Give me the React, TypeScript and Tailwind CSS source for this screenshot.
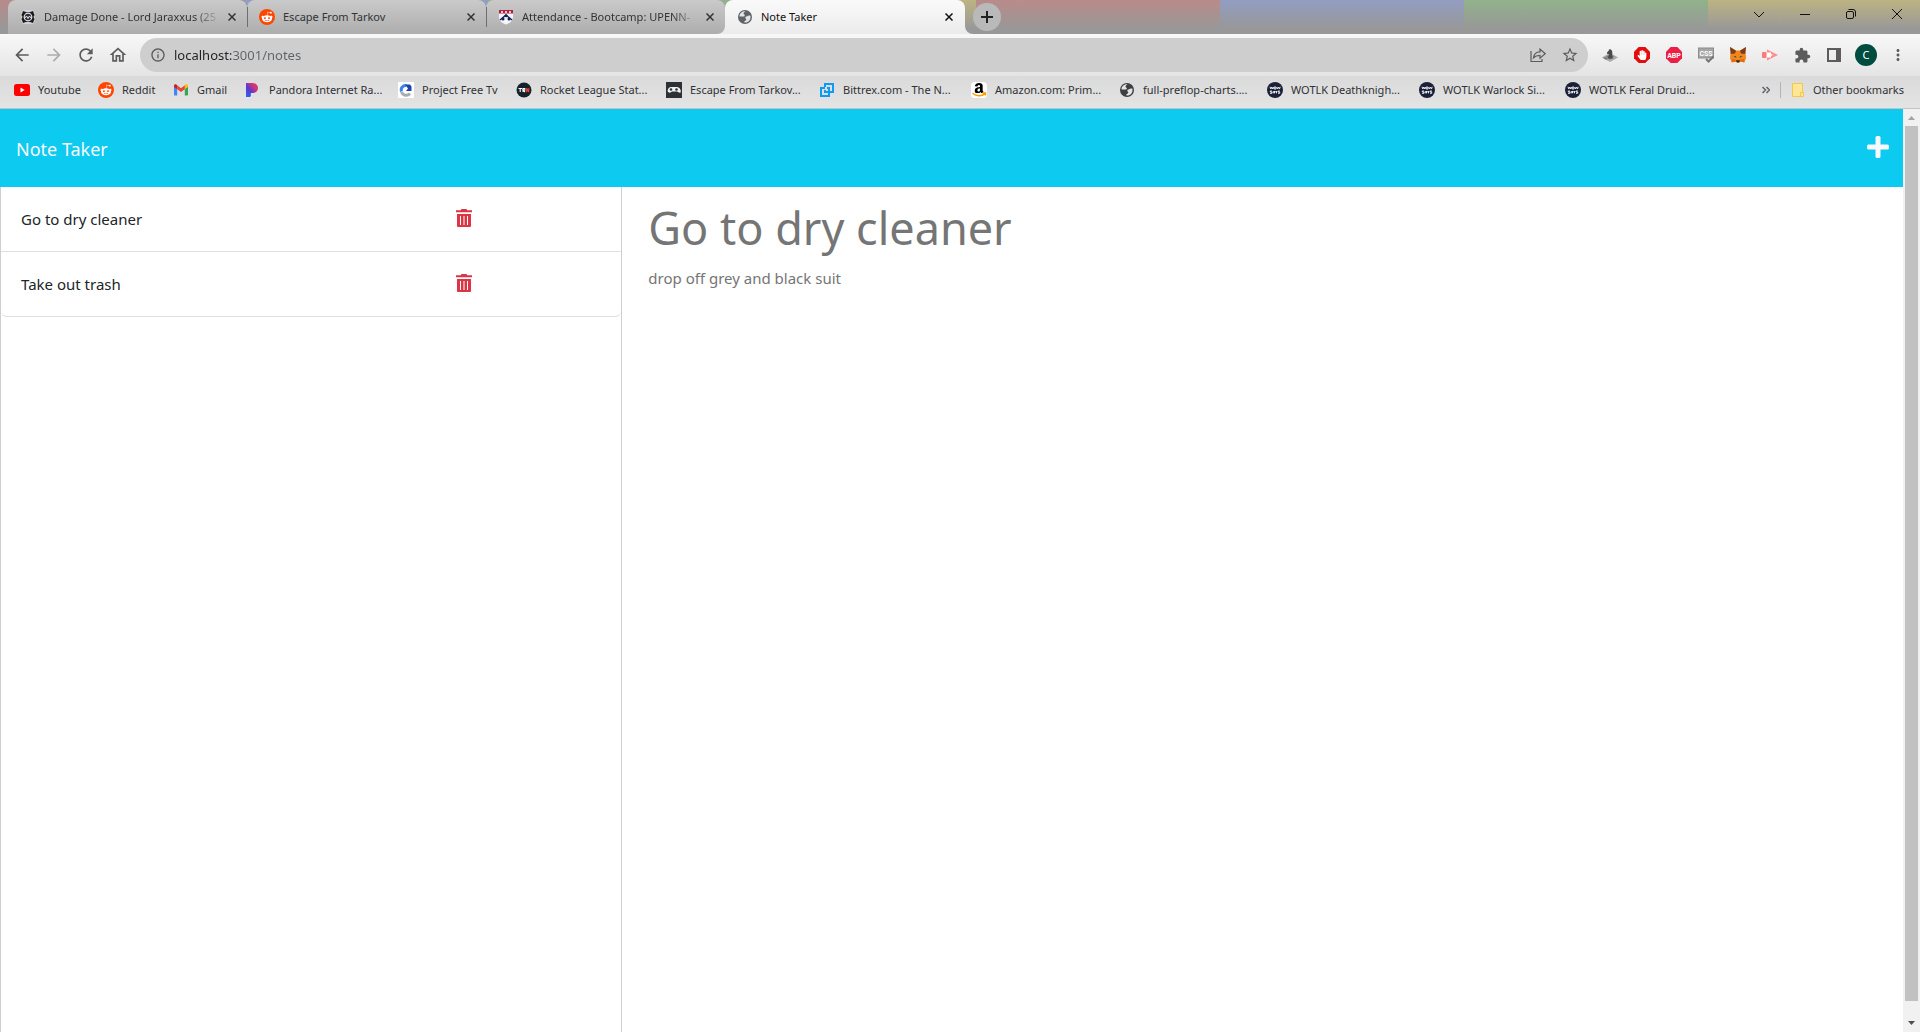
import type { ReactNode } from "react";
import { FaHandPaper, FaRedditAlien, FaAmazon } from "react-icons/fa";
import {
  MdArrowBack,
  MdArrowForward,
  MdRefresh,
  MdOutlineHome,
  MdInfoOutline,
  MdStarBorder,
  MdExtension,
  MdMoreVert,
} from "react-icons/md";

/* ---------- Favicons ---------- */

function RedditIcon() {
  return (
    <span className="flex size-4 items-center justify-center rounded-full bg-[#ff4500]">
      <FaRedditAlien className="size-3 text-white" />
    </span>
  );
}

function LogsIcon() {
  return (
    <svg viewBox="0 0 16 16" className="size-4">
      <rect x="1" y="1" width="14" height="14" rx="4" fill="#d2d2d4" />
      <path d="M3 2l3 1h4l3-1 1.500 4-1 2 1 2L13 14l-3-1H6l-3 1-1.500-4 1-2-1-2z" fill="#1c1c22" />
      <circle cx="8" cy="8" r="3.800" fill="#30303a" stroke="#e4e4ea" strokeWidth="1.200" />
      <path d="M4.500 9.500l2-2.500L8 9.500 9.500 7l2 2.500" fill="none" stroke="#e8e8ee" strokeWidth="1" />
    </svg>
  );
}

function PennIcon() {
  return (
    <svg viewBox="0 0 16 16" className="size-4">
      <path d="M1 1h14v7c0 4-3 6-7 7.500C4 14 1 12 1 8z" fill="#f4f4f8" />
      <path d="M1 1h14v3.500H1z" fill="#b3203f" />
      <path d="M3 3h2M7 3h2M11 3h2" stroke="#fff" strokeWidth="1.300" />
      <path d="M2 11l6-5 6 5" fill="none" stroke="#15225e" strokeWidth="1.400" />
      <circle cx="8" cy="6.800" r="1.500" fill="#15225e" />
      <circle cx="5" cy="10" r="1.500" fill="#15225e" />
      <circle cx="11" cy="10" r="1.500" fill="#15225e" />
      <circle cx="8" cy="12" r="1.200" fill="#fff" />
    </svg>
  );
}

function GlobeIcon({ dark = false }: { dark?: boolean }) {
  return (
    <svg viewBox="0 0 16 16" className={dark ? "size-4 text-[#3c4043]" : "size-4 text-[#5f6368]"}>
      <circle cx="8" cy="8" r="7" fill="currentColor" />
      <path
        d="M8.500 2.200c-.8.800-2 1-2 2.300 0 1.100 1.300.9 1.300 2 0 .8-.9 1.100-1.900 1H2.600c-.4-2.800 2.200-5.600 5.900-5.300zM13.500 7c-.8-.5-1.700-.6-2.600 0-.9.500-2.400.3-2.600 1.400-.2 1 .9 1.200 1 2 .1.900-1 1-1.600 1.500-.5.500-.4 1.100-.2 1.600 3.600.500 6.500-2.500 6-6.500z"
        fill="#e4e4e4"
      />
    </svg>
  );
}

function YoutubeIcon() {
  return (
    <svg viewBox="0 0 16 16" className="size-4">
      <rect y="2" width="16" height="12" rx="2.500" fill="#f00" />
      <path d="M6.500 5.500v5L10.700 8z" fill="#fff" />
    </svg>
  );
}

function GmailIcon() {
  return (
    <svg viewBox="0 0 16 16" className="size-4">
      <path d="M1 4v8.500c0 .6.400 1 1 1h2.200V6.800z" fill="#4285f4" />
      <path d="M15 4v8.500c0 .6-.4 1-1 1h-2.200V6.800z" fill="#34a853" />
      <path d="M11.800 3.500V7L15 5V3.800c0-1.300-1.500-2-2.500-1.200z" fill="#fbbc04" />
      <path d="M4.200 7V3.200L8 6.200l3.800-3V7.200L8 10z" fill="#ea4335" />
      <path d="M1 3.800V5l3.200 2.200V3.300l-.7-.6C2.500 1.900 1 2.600 1 3.800z" fill="#c5221f" />
    </svg>
  );
}

function PandoraIcon() {
  return (
    <svg viewBox="0 0 16 16" className="size-4">
      <defs>
        <linearGradient id="pandora" x1="0" y1="1" x2="1" y2="0">
          <stop offset="0" stopColor="#1e6cf0" />
          <stop offset="0.400" stopColor="#5b35d5" />
          <stop offset="0.650" stopColor="#c0367f" />
          <stop offset="1" stopColor="#f0405f" />
        </linearGradient>
      </defs>
      <path d="M1 1h6.500C11 1 13 3 13 6s-2.300 5-5.500 5H5.800v2.500c0 .9-.5 1.500-1.500 1.500H1z" fill="url(#pandora)" />
    </svg>
  );
}

function ProjectIcon() {
  return (
    <svg viewBox="0 0 16 16" className="size-4">
      <rect width="16" height="16" fill="#fff" />
      <path d="M3.500 9.500a4.500 4.500 0 0 1 5-6" fill="none" stroke="#3f82e8" strokeWidth="3" />
      <path d="M7 2.500h5l1.500 2V9H8l2-2.500z" fill="#1a45b0" />
      <path d="M3.500 10a5 5 0 0 0 8.500 1.500" fill="none" stroke="#a9adb3" strokeWidth="3" />
    </svg>
  );
}

function TrnIcon() {
  return (
    <svg viewBox="0 0 16 16" className="size-4">
      <circle cx="8" cy="8" r="7.500" fill="#17212b" />
      <path d="M2.500 6.500h3.500M4.200 6.500v3.500M7 10V6.500h1.800v1.500H7l2 2" fill="none" stroke="#fff" strokeWidth="1.100" />
      <path d="M10.700 10.200V6.300l2 3.700V6.300" fill="none" stroke="#e8432e" strokeWidth="1.200" />
    </svg>
  );
}

function GamepadIcon() {
  return (
    <svg viewBox="0 0 16 16" className="size-4">
      <rect width="16" height="16" fill="#2d3136" />
      <path d="M5 5h6c3 0 4.500 4 3.500 5.500-1 1-2.500-1-3.500-1H6c-1 1-2 1.500-3.500.8C.8 9.300 2 5 5 5z" fill="#f2f2f2" />
      <circle cx="5" cy="7.500" r="1.300" fill="#2d3136" />
      <circle cx="10.500" cy="7.500" r="1.300" fill="#2d3136" />
    </svg>
  );
}

function BittrexIcon() {
  return (
    <svg viewBox="0 0 16 16" className="size-4" fill="none" stroke="#0f9bf5" strokeWidth="2">
      <path d="M6 5V2h8v8h-4" />
      <path d="M6 6H2v8h8v-3" />
      <path d="M6 8v2h4V6H8" />
    </svg>
  );
}

function AmazonIcon() {
  return (
    <span className="relative flex size-4 items-center justify-center overflow-hidden rounded-sm bg-white">
      <FaAmazon className="size-4 text-black" />
      <svg viewBox="0 0 16 16" className="absolute inset-0 size-4">
        <rect y="11" width="16" height="5" fill="#fff" />
        <path d="M1.500 11.200c4 3.300 9 3.300 12.300.7M11.500 11h3v2.500" fill="none" stroke="#ff9900" strokeWidth="1.400" />
      </svg>
    </span>
  );
}

function WowSimsIcon() {
  return (
    <svg viewBox="0 0 16 16" className="size-4">
      <circle cx="8" cy="8" r="8" fill="#1b2036" />
      <path
        d="M3 4.800l.8 2.200 1-2 1 2L6.500 5M7.200 5h1.800v2H7.200zM9.800 5l.7 2 1-2 1 2 .7-2.200M5 9H3.300v1H5v1.300H3M6.300 9v2.300M7.500 11.300V9l1 1.200 1-1.200v2.300M12.800 9H11v1h1.700v1.300H11"
        fill="none"
        stroke="#e9ebf2"
        strokeWidth="1"
      />
    </svg>
  );
}

/* ---------- Tab strip ---------- */

type Tab = { title: string; icon: ReactNode; active?: boolean; divider?: boolean; fades?: boolean };

const tabs: Tab[] = [
  { title: "Damage Done - Lord Jaraxxus (25", icon: <LogsIcon />, divider: true, fades: true },
  { title: "Escape From Tarkov", icon: <RedditIcon />, divider: true },
  { title: "Attendance - Bootcamp: UPENN-", icon: <PennIcon />, fades: true },
  { title: "Note Taker", icon: <GlobeIcon />, active: true },
];

function CloseGlyph() {
  return (
    <svg viewBox="0 0 8 8" className="size-2" fill="none" stroke="currentColor" strokeWidth="1.500">
      <path d="M.5.500l7 7M7.500.500l-7 7" />
    </svg>
  );
}

function TabItem({ tab }: { tab: Tab }) {
  return (
    <div
      className={
        tab.active
          ? "relative flex h-full w-60 items-center rounded-t-lg bg-linear-to-b from-[#fafafa] to-[#ebebeb] pr-3 pl-3 text-[#111]"
          : "relative flex h-full w-[239px] items-center rounded-t-lg bg-linear-to-b from-[#cacaca] to-[#adadad] pr-[11px] pl-3 text-[#333]"
      }
    >
      {tab.active && (
        <>
          <svg viewBox="0 0 8 8" className="absolute bottom-0 -left-2 size-2" fill="#ebebeb">
            <path d="M8 0v8H0a8 8 0 0 0 8-8z" />
          </svg>
          <svg viewBox="0 0 8 8" className="absolute -right-2 bottom-0 size-2" fill="#ebebeb">
            <path d="M0 0v8h8a8 8 0 0 1-8-8z" />
          </svg>
        </>
      )}
      {tab.icon}
      <span
        className={
          tab.fades
            ? "ml-2 w-44 overflow-hidden mask-r-from-85% whitespace-nowrap"
            : "ml-2 w-44 overflow-hidden whitespace-nowrap"
        }
      >
        {tab.title}
      </span>
      <button aria-label={`Close ${tab.title}`} className="ml-auto flex h-4 w-2 items-center justify-center">
        <CloseGlyph />
      </button>
      {tab.divider && <span className="absolute top-[7px] -right-px z-10 h-5 w-px bg-[#6e6e6e]" />}
    </div>
  );
}

function WindowButton({ label, children }: { label: string; children: ReactNode }) {
  return (
    <button aria-label={label} className="flex h-7 w-[46px] items-center justify-center">
      <svg viewBox="0 0 10 10" className="size-2.5 overflow-visible" fill="none" stroke="#111" strokeWidth="1">
        {children}
      </svg>
    </button>
  );
}

function TabStrip() {
  return (
    <div className="bg-[repeating-linear-gradient(90deg,#b98b8a_0_244px,#929dc1_244px_488px,#91b28b_488px_732px,#bdb382_732px_976px)]">
      <div className="flex h-[34px] bg-linear-to-b from-transparent to-[#989898] to-85% pl-2 text-[11px]">
        {tabs.map((tab) => (
          <TabItem key={tab.title} tab={tab} />
        ))}
        <button
          aria-label="New tab"
          className="mt-[3px] ml-2 flex size-7 items-center justify-center rounded-full bg-[#b9b9b9]"
        >
          <svg viewBox="0 0 12 12" className="size-3" stroke="#222" strokeWidth="2">
            <path d="M6 0v12M0 6h12" />
          </svg>
        </button>
        <div className="ml-auto flex">
          <WindowButton label="Search tabs">
            <path d="M0 3l5 5 5-5" />
          </WindowButton>
          <WindowButton label="Minimize">
            <path d="M0 5.500h10" />
          </WindowButton>
          <WindowButton label="Restore">
            <rect x="0.500" y="2.500" width="7" height="7" rx="1.500" />
            <path d="M2.500.500h4.500a2.500 2.500 0 0 1 2.500 2.500v4.500" />
          </WindowButton>
          <WindowButton label="Close window">
            <path d="M0 0l10 10M10 0L0 10" />
          </WindowButton>
        </div>
      </div>
    </div>
  );
}

/* ---------- Toolbar ---------- */

function ToolButton({ label, children }: { label: string; children: ReactNode }) {
  return (
    <button aria-label={label} className="flex size-8 shrink-0 items-center justify-center text-[#5c5c5c]">
      {children}
    </button>
  );
}

function Toolbar() {
  return (
    <div className="flex h-[42px] items-center bg-linear-to-b from-[#f8f8f8] to-[#e4e4e4] px-1.5">
      <ToolButton label="Back">
        <MdArrowBack className="size-5" />
      </ToolButton>
      <ToolButton label="Forward">
        <MdArrowForward className="size-5 text-[#adadad]" />
      </ToolButton>
      <ToolButton label="Reload">
        <MdRefresh className="size-5" />
      </ToolButton>
      <ToolButton label="Home">
        <MdOutlineHome className="size-5" />
      </ToolButton>

      <div className="mx-1.5 flex h-[34px] grow items-center rounded-full bg-[#cecece] pr-0.5 pl-2.5 text-[#5c5c5c]">
        <MdInfoOutline className="size-4" />
        <input
          aria-label="Address"
          defaultValue="localhost:3001/notes"
          className="ml-2 grow bg-[linear-gradient(90deg,#202124_57px,#5f6368_57px)] bg-clip-text pt-0.5 text-[13px] text-transparent outline-none"
        />
        <ToolButton label="Share">
          <svg viewBox="0 0 16 16" className="size-4" fill="none" stroke="currentColor" strokeWidth="1.200">
            <path d="M1 4v10.500h11v-2.500" />
            <path d="M3.500 10.800C4 7 6.500 4.800 10 4.800V2l5.200 4.700-5.200 4.500V8.400c-2.800 0-4.800.6-6.500 2.400z" />
          </svg>
        </ToolButton>
        <ToolButton label="Bookmark this page">
          <MdStarBorder className="size-[18px]" />
        </ToolButton>
      </div>

      <ToolButton label="Chess extension">
        <svg viewBox="0 0 16 16" className="size-4">
          <path d="M0 10.500L5 7.500h6l5 3L8 15z" fill="#a9a9a9" />
          <path d="M4 9.500l4-2 4 2-4 3zM1 11l3-1 2 2-2 .8z" fill="#777" />
          <path d="M6 11.500c0-2 .8-2.500 1.200-4L5.200 7 5 5.500 7 3.200l.6-1.200c2 .2 3 2 2.700 4.500-.2 2 0 3 .7 5z" fill="#4a4a4a" />
        </svg>
      </ToolButton>
      <ToolButton label="AdBlock">
        <svg viewBox="0 0 16 16" className="absolute size-4">
          <path d="M4.700 0h6.600L16 4.700v6.600L11.300 16H4.700L0 11.300V4.700z" fill="#e40d0d" />
        </svg>
        <FaHandPaper className="relative size-2.5 text-white" />
      </ToolButton>
      <ToolButton label="Adblock Plus">
        <svg viewBox="0 0 16 16" className="size-4">
          <path d="M4.700 0h6.600L16 4.700v6.600L11.300 16H4.700L0 11.300V4.700z" fill="#ed1e45" />
          <text x="8" y="10.500" textAnchor="middle" fontSize="7" fontWeight="700" fontFamily="Roboto, sans-serif" fill="#fff">
            ABP
          </text>
        </svg>
      </ToolButton>
      <ToolButton label="CSS viewer">
        <svg viewBox="0 0 16 16" className="size-4">
          <rect x="0.500" y="1" width="15" height="10" fill="#a6a6a6" stroke="#8c8c8c" />
          <text x="8" y="9" textAnchor="middle" fontSize="7" fontWeight="700" fontFamily="Roboto, sans-serif" fill="#fff">
            CSS
          </text>
          <path d="M8 12l2.500 2.500L15.500 9.500" fill="none" stroke="#777" strokeWidth="2" />
        </svg>
      </ToolButton>
      <ToolButton label="MetaMask">
        <svg viewBox="0 0 16 16" className="size-4">
          <path d="M0 0l6 3.500h4L16 0l-.5 6 .5 5-1.500 4.500L10 14.500l-1 1.500H7l-1-1.500-4.500 1L0 11l.5-5z" fill="#f0861c" />
          <path d="M0 0l6 3.800L5 6.500.8 7zM16 0l-6 3.800 1 2.700 4.200.5z" fill="#7a3e1c" />
          <path d="M3.500 9.500l2.500-.3.300 1.600zM12.500 9.500L10 9.200l-.3 1.600z" fill="#233447" />
          <path d="M6 13.300h4l-.7 2H6.700z" fill="#2a2a2a" />
          <path d="M2 12l3.500.5.500 2-4 .8zM14 12l-3.500.5-.5 2 4 .8z" fill="#e06a1a" />
        </svg>
      </ToolButton>
      <ToolButton label="Screen recorder">
        <svg viewBox="0 0 16 16" className="size-4">
          <path d="M5 2.500L16 8 5 13.500z" fill="#fb8f8f" />
          <path d="M5 5.500h4V7l2 1-2 1v1.500H5z" fill="#fff" />
          <rect y="5" width="4.500" height="6" rx="1" fill="#fb7b7b" />
        </svg>
      </ToolButton>
      <ToolButton label="Extensions">
        <MdExtension className="size-[17px]" />
      </ToolButton>
      <ToolButton label="Side panel">
        <svg viewBox="0 0 14 14" className="size-3.5">
          <path d="M0 0h14v14H0zM2 2v10h7V2z" fill="currentColor" fillRule="evenodd" />
        </svg>
      </ToolButton>
      <ToolButton label="Profile">
        <span className="flex size-[22px] items-center justify-center rounded-full bg-[#004d40] text-[11px] text-white">
          C
        </span>
      </ToolButton>
      <ToolButton label="Menu">
        <MdMoreVert className="size-[18px]" />
      </ToolButton>
    </div>
  );
}

/* ---------- Bookmarks ---------- */

const bookmarks: { label: string; icon: ReactNode; width: string }[] = [
  { label: "Youtube", icon: <YoutubeIcon />, width: "w-21" },
  { label: "Reddit", icon: <RedditIcon />, width: "w-[75px]" },
  { label: "Gmail", icon: <GmailIcon />, width: "w-[72px]" },
  { label: "Pandora Internet Ra...", icon: <PandoraIcon />, width: "w-[153px]" },
  { label: "Project Free Tv", icon: <ProjectIcon />, width: "w-[118px]" },
  { label: "Rocket League Stat...", icon: <TrnIcon />, width: "w-[150px]" },
  { label: "Escape From Tarkov...", icon: <GamepadIcon />, width: "w-[153px]" },
  { label: "Bittrex.com - The N...", icon: <BittrexIcon />, width: "w-[152px]" },
  { label: "Amazon.com: Prim...", icon: <AmazonIcon />, width: "w-[148px]" },
  { label: "full-preflop-charts....", icon: <GlobeIcon dark />, width: "w-[148px]" },
  { label: "WOTLK Deathknigh...", icon: <WowSimsIcon />, width: "w-[152px]" },
  { label: "WOTLK Warlock Si...", icon: <WowSimsIcon />, width: "w-[146px]" },
  { label: "WOTLK Feral Druid...", icon: <WowSimsIcon />, width: "w-[152px]" },
];

function BookmarksBar() {
  return (
    <nav className="flex h-[33px] items-center border-b border-[#c3c3c3] bg-linear-to-b from-[#dadada] to-[#e4e4e4] pr-4 pb-1 pl-3.5 text-[11px] text-[#303134]">
      {bookmarks.map(({ label, icon, width }) => (
        <a key={label} href="#" className={`flex shrink-0 items-center gap-2 whitespace-nowrap ${width}`}>
          {icon}
          {label}
        </a>
      ))}
      <button aria-label="More bookmarks" className="ml-auto flex items-center">
        <svg viewBox="0 0 8 8" className="size-2" fill="none" stroke="#5f6368" strokeWidth="1.500">
          <path d="M.5 1l3 3-3 3M4.500 1l3 3-3 3" />
        </svg>
      </button>
      <span className="ml-2.5 h-4 w-px bg-[#b4b4b4]" />
      <a href="#" className="ml-2.5 flex items-center gap-2 whitespace-nowrap">
        <svg viewBox="0 0 14 16" className="h-4 w-3.5">
          <path d="M1.500 1.500h10v9h1v4h-11z" fill="#ffe694" stroke="#f0c94d" />
          <path d="M9.500 14.500v-4h3" fill="none" stroke="#f0c94d" />
        </svg>
        Other bookmarks
      </a>
    </nav>
  );
}

/* ---------- Note Taker page ---------- */

const notes = ["Go to dry cleaner", "Take out trash"];

function TrashIcon() {
  return (
    <svg viewBox="0 0 16 18" className="h-[18px] w-4" fill="#dc3545">
      <path d="M5.500 0h5l.7 1.200H16v2H0v-2h4.800z" />
      <path fillRule="evenodd" d="M1 5h14v12a1 1 0 0 1-1 1H2a1 1 0 0 1-1-1zm3 2v9h1V7zm3.500 0v9h1V7zm3.500 0v9h1V7z" />
    </svg>
  );
}

function NotePage() {
  return (
    <div className="flex min-w-0 grow flex-col bg-white">
      <header className="flex h-[78px] items-center justify-between bg-[#0dcaf0] pr-3.5 pb-0.5 pl-4 text-[#f8f9fa]">
        <a href="#" className="mt-1 text-lg">
          Note Taker
        </a>
        <button aria-label="New note">
          <svg viewBox="0 0 22 22" className="size-[22px]" fill="currentColor">
            <rect x="8.500" width="5" height="22" rx="1.500" />
            <rect y="8.500" width="22" height="5" rx="1.500" />
          </svg>
        </button>
      </header>
      <div className="grid grow grid-cols-3">
        <aside className="mr-3 border-x border-[#cfcfcf]">
          <ul className="text-[15px] text-[#212529]">
            {notes.map((note) => (
              <li
                key={note}
                className="grid h-[65px] grid-cols-4 items-center border-b border-[#dfdfdf] px-5 last:rounded-b-md"
              >
                <a href="#" className="col-span-3">
                  {note}
                </a>
                <button aria-label={`Delete ${note}`} className="justify-self-start pb-0.5">
                  <TrashIcon />
                </button>
              </li>
            ))}
          </ul>
        </aside>
        <main className="col-span-2 flex flex-col px-3.5 pt-[13px] text-[#757575]">
          <input
            aria-label="Note title"
            readOnly
            value="Go to dry cleaner"
            className="h-14 w-full text-[45px] outline-none"
          />
          <textarea
            aria-label="Note text"
            readOnly
            value="drop off grey and black suit"
            className="mt-2.5 w-full grow resize-none text-[15px] leading-6 outline-none"
          />
        </main>
      </div>
    </div>
  );
}

function Scrollbar() {
  return (
    <div className="flex w-[17px] shrink-0 flex-col items-center bg-[#f1f1f1]">
      <svg viewBox="0 0 17 17" className="size-[17px]">
        <path d="M5 11l3.500-4 3.500 4z" fill="#a3a3a3" />
      </svg>
      <div className="w-[13px] grow bg-[#c1c1c1]" />
      <svg viewBox="0 0 17 31" className="h-[31px] w-[17px]">
        <path d="M5 20l3.500 4 3.500-4z" fill="#505050" />
      </svg>
    </div>
  );
}

export default function App() {
  return (
    <div className="flex h-screen flex-col overflow-hidden font-['Noto_Sans',sans-serif]">
      <TabStrip />
      <Toolbar />
      <BookmarksBar />
      <div className="flex min-h-0 grow">
        <NotePage />
        <Scrollbar />
      </div>
    </div>
  );
}
